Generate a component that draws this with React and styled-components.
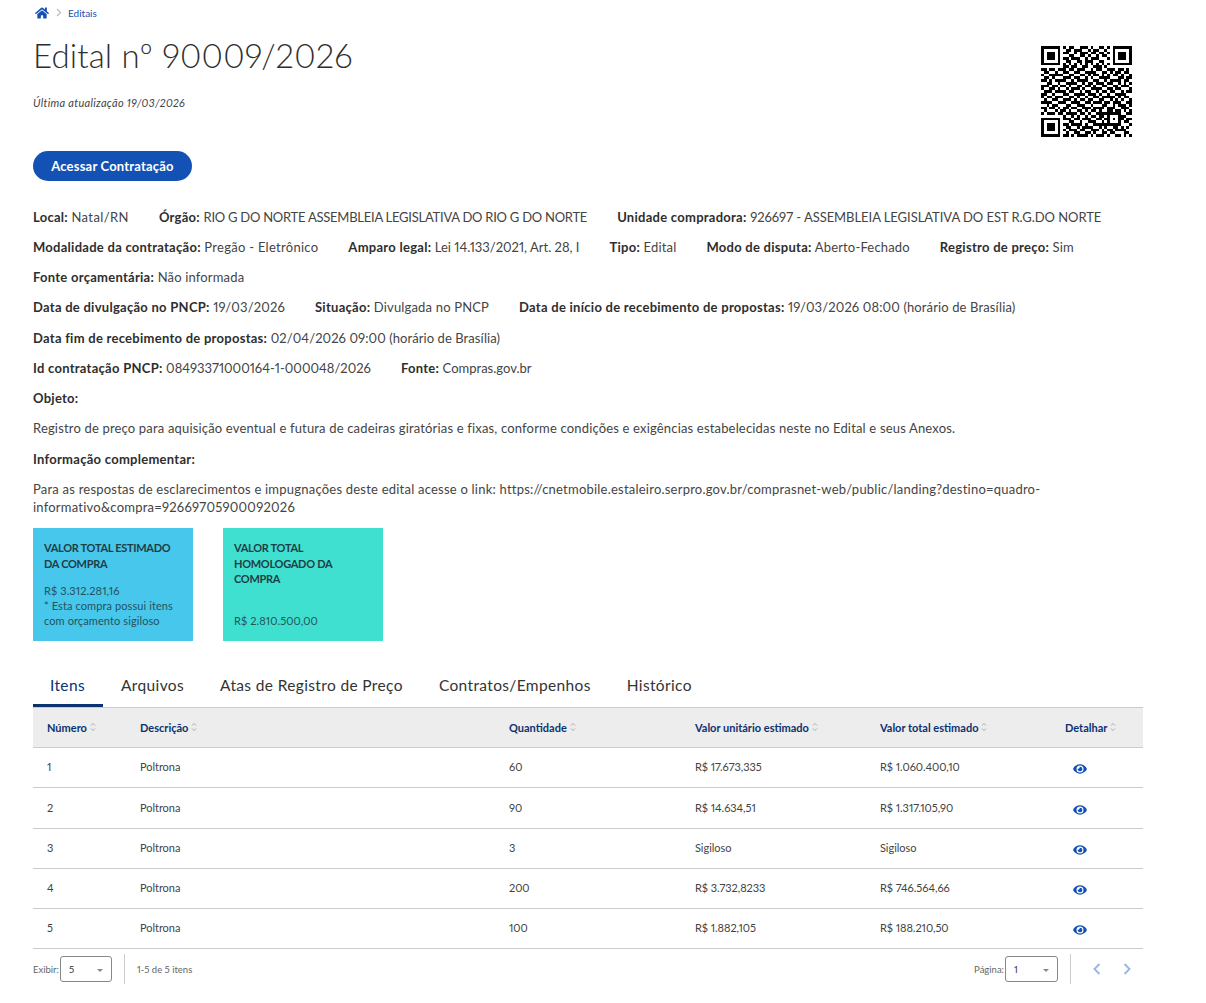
import React from "react";
import styled, { createGlobalStyle } from "styled-components";
import { FaHome, FaEye } from "react-icons/fa";

const Global = createGlobalStyle`
  html, body { margin: 0; padding: 0; background: #fff; }
  body {
    font-family: "Lato", "Liberation Sans", sans-serif;
    font-variant-numeric: proportional-nums;
    color: #333;
    font-size: 13px;
  }
`;

const Page = styled.div`
  width: 1110px;
  margin-left: 33px;
  padding-top: 6px;
`;
const Crumbs = styled.nav`
  display: flex;
  align-items: center;
  height: 13px;
  padding-left: 2px;
  font-size: 10px;
  color: #1351b4;
  svg { color: #1351b4; }
`;
const CrumbSep = styled.svg`
  width: 6px;
  height: 9px;
  margin: 0 6px 0 7px;
`;
const Header = styled.header`
  display: flex;
  justify-content: space-between;
  align-items: flex-start;
  padding-right: 11px;
`;
const HeadText = styled.div`
  display: flex;
  flex-direction: column;
  align-items: flex-start;
`;
const Title = styled.h1`
  margin: 13px 0 0;
  font-size: 33px;
  line-height: 46px;
  font-weight: 300;
  letter-spacing: 0.15px;
  color: #2e2e2e;
`;
const Updated = styled.p`
  margin: 18px 0 1px;
  font-size: 11px;
  line-height: 13px;
  font-style: italic;
  font-weight: 400;
  letter-spacing: 0.3px;
  color: #444;
`;
const Access = styled.button`
  margin-top: 41px;
  width: 159px;
  height: 30px;
  border: 0;
  border-radius: 15px;
  background: #1351b4;
  color: #fff;
  font: 700 13px "Lato", sans-serif;
  letter-spacing: 0.2px;
`;
const Qr = styled.svg`
  width: 91px;
  height: 91px;
  margin-top: 27px;
  display: block;
  shape-rendering: crispEdges;
`;
const Info = styled.section`
  margin-top: 20.7px;
`;
const Row = styled.div`
  display: flex;
  flex-wrap: wrap;
  column-gap: 30px;
  min-height: 30.25px;
  line-height: 30.25px;
  font-size: 13px;
  font-weight: 400;
  letter-spacing: 0.17px;
  color: #444;
`;
const Label = styled.b`
  font-weight: 700;
  letter-spacing: 0.27px;
  color: #2e2e2e;
`;
const Tight = styled.span`
  letter-spacing: ${(p) => p.$ls}px;
`;
const Para = styled.p`
  margin: 6px 0 0;
  font-size: 13px;
  line-height: 18px;
  font-weight: 400;
  letter-spacing: 0.22px;
  color: #444;
  width: 1050px;
`;
const Cards = styled.div`
  display: flex;
  gap: 30px;
  margin-top: 12.3px;
`;
const Card = styled.div`
  box-sizing: border-box;
  width: 160px;
  height: 113px;
  padding: 12px 11px 0;
  background: ${(p) => p.$bg};
  color: #1f3d44;
  display: flex;
  flex-direction: column;
  font-size: 11px;
  line-height: 15.5px;
`;
const CardTitle = styled.div`
  font-weight: 700;
  letter-spacing: -0.3px;
  height: ${(p) => p.$h}px;
`;
const CardText = styled.div`
  font-weight: 400;
  opacity: 0.85;
  letter-spacing: 0.1px;
  line-height: 15px;
`;
const Tabs = styled.div`
  display: flex;
  margin-top: 24px;
  height: 42px;
  border-bottom: 1px solid #ccc;
  box-sizing: content-box;
`;
const Tab = styled.div`
  padding: 11px 18px 0 ${(p) => (p.$first ? 17 : 18)}px;
  font-size: 15.5px;
  line-height: 18px;
  letter-spacing: 0.36px;
  color: #333;
  box-sizing: border-box;
  height: 42px;
  ${(p) => p.$active && `border-bottom: 3px solid #0c326f; color: #0c326f; padding-right: 18px;`}
`;
const Grid = `
  display: grid;
  grid-template-columns: 93px 369px 186px 185px 185px 92px;
  align-items: center;
`;
const THead = styled.div`
  ${Grid}
  height: 39px;
  background: #ededed;
  border-bottom: 1px solid #ccc;
  color: #0c326f;
  font-size: 11px;
  font-weight: 700;
`;
const Th = styled.div`
  padding-left: 14px;
  padding-bottom: 1px;
  display: flex;
  align-items: center;
  gap: 3px;
`;
const TRow = styled.div`
  ${Grid}
  box-sizing: border-box;
  height: 40.25px;
  border-bottom: 1px solid #ccc;
  font-size: 11px;
  color: #444;
  font-weight: 400;
`;
const Td = styled.div`
  padding-left: 14px;
  padding-bottom: 2px;
  letter-spacing: -0.05px;
`;
const EyeCell = styled.div`
  padding-left: 22px;
  padding-top: 3px;
  color: #1351b4;
  display: flex;
  svg { width: 14px; height: 14px; }
`;
const Footer = styled.footer`
  display: flex;
  align-items: center;
  justify-content: space-between;
  height: 40px;
  font-size: 9.5px;
  color: #666;
`;
const FootGroup = styled.div`
  display: flex;
  align-items: center;
  padding-right: ${(p) => p.$pr || 0}px;
`;
const Select = styled.div`
  box-sizing: border-box;
  width: ${(p) => p.$w}px;
  height: 26px;
  margin-left: 1px;
  padding: 0 8px;
  border: 1px solid #888;
  border-radius: 3px;
  display: flex;
  align-items: center;
  justify-content: space-between;
  color: #333;
`;
const Caret = styled.span`
  width: 0;
  height: 0;
  border-left: 3px solid transparent;
  border-right: 3px solid transparent;
  border-top: 3px solid #888;
  margin-top: 2px;
`;
const Divider = styled.span`
  width: 1px;
  height: 30px;
  background: #ccc;
  margin: 0 12px;
`;
const Pager = styled.svg`
  width: 10px;
  height: 14px;
  margin-left: ${(p) => p.$ml}px;
`;

const raw = [
"111111101011001110100110101111111",
"100000100110111001011001001000001",
"101110101100101110110110101011101",
"101110100011001101001011001011101",
"101110101101110010111000101011101",
"100000100110011011100110001000001",
"111111101010101010101010101111111",
"000000001101100110011101000000000",
"110110111011011100101100111011010",
"011001001100110011110011010110110",
"100111110011001101011010101101001",
"011010001110110010100111100011011",
"110101111001011110011001011110110",
"001100100111100101101110110010101",
"111011011010011011010011001101110",
"100110100101110100111100110110001",
"011101111011001011001011011001011",
"110010001100111101110100100111100",
"101101110011010010011011111010110",
"010011001110101101100110010101001",
"111100111001110011011101101110011",
"001011000110011100100011001011101",
"110110101101100111011110111001110",
"010001011010011010110100110110101",
"101110110111101101001111111110011",
"000000001001010010110110100011100",
"111111101110110111001101101011011",
"100000100011001001110010100010110",
"101110101101111010011111111110001",
"101110100110010111100101001101010",
"101110101011101100111010110111100",
"100000100100110011010011011000110",
"111111101101011110101110100110101",
];

function QrCode() {
  const rects = [];
  raw.forEach((r, y) => {
    r.padEnd(33, "0").slice(0, 33).split("").forEach((c, x) => {
      if (c === "1") rects.push(`M${x} ${y}h1v1h-1z`);
    });
  });
  return (
    <Qr viewBox="0 0 33 33" aria-label="QR code">
      <path d={rects.join("")} fill="#000" />
    </Qr>
  );
}

const Sort = () => (
  <svg width="6" height="10" viewBox="0 0 6 10" fill="none" stroke="#999" strokeWidth="0.8">
    <path d="M1 3.5 3 1.5l2 2M1 6.5l2 2 2-2" />
  </svg>
);

const Info2 = ({ l, children }) => (
  <span>
    <Label>{l}:</Label> {children}
  </span>
);

const heads = ["Número", "Descrição", "Quantidade", "Valor unitário estimado", "Valor total estimado", "Detalhar"];
const items = [
  ["1", "Poltrona", "60", "R$ 17.673,335", "R$ 1.060.400,10"],
  ["2", "Poltrona", "90", "R$ 14.634,51", "R$ 1.317.105,90"],
  ["3", "Poltrona", "3", "Sigiloso", "Sigiloso"],
  ["4", "Poltrona", "200", "R$ 3.732,8233", "R$ 746.564,66"],
  ["5", "Poltrona", "100", "R$ 1.882,105", "R$ 188.210,50"],
];

export default function App() {
  return (
    <Page>
      <Global />
      <Crumbs>
        <FaHome size={14} />
        <CrumbSep viewBox="0 0 6 9" fill="none" stroke="#bbb" strokeWidth="1.2">
          <path d="M1 1l3.5 3.5L1 8" />
        </CrumbSep>
        Editais
      </Crumbs>
      <Header>
        <HeadText>
          <Title>Edital nº 90009/2026</Title>
          <Updated>Última atualização 19/03/2026</Updated>
          <Access>Acessar Contratação</Access>
        </HeadText>
        <QrCode />
      </Header>
      <Info>
        <Row>
          <Info2 l="Local"><Tight $ls={0.4}>Natal/RN</Tight></Info2>
          <Info2 l="Órgão"><Tight $ls={-0.25}>RIO G DO NORTE ASSEMBLEIA LEGISLATIVA DO RIO G DO NORTE</Tight></Info2>
          <Info2 l="Unidade compradora"><Tight $ls={-0.05}>926697 - ASSEMBLEIA LEGISLATIVA DO EST R.G.DO NORTE</Tight></Info2>
        </Row>
        <Row>
          <Info2 l="Modalidade da contratação"><Tight $ls={0.28}>Pregão - Eletrônico</Tight></Info2>
          <Info2 l="Amparo legal"><Tight $ls={0}>Lei 14.133/2021, Art. 28, I</Tight></Info2>
          <Info2 l="Tipo">Edital</Info2>
          <Info2 l="Modo de disputa">Aberto-Fechado</Info2>
          <Info2 l="Registro de preço">Sim</Info2>
        </Row>
        <Row>
          <Info2 l="Fonte orçamentária">Não informada</Info2>
        </Row>
        <Row>
          <Info2 l="Data de divulgação no PNCP">19/03/2026</Info2>
          <Info2 l="Situação">Divulgada no PNCP</Info2>
          <Info2 l="Data de início de recebimento de propostas"><Tight $ls={0.12}>19/03/2026 08:00 (horário de Brasília)</Tight></Info2>
        </Row>
        <Row>
          <Info2 l="Data fim de recebimento de propostas"><Tight $ls={0.07}>02/04/2026 09:00 (horário de Brasília)</Tight></Info2>
        </Row>
        <Row>
          <Info2 l="Id contratação PNCP"><Tight $ls={0}>08493371000164-1-000048/2026</Tight></Info2>
          <Info2 l="Fonte"><Tight $ls={0}>Compras.gov.br</Tight></Info2>
        </Row>
        <Row>
          <Label>Objeto:</Label>
        </Row>
        <Row>
          Registro de preço para aquisição eventual e futura de cadeiras giratórias e fixas, conforme condições e exigências estabelecidas neste no Edital e seus Anexos.
        </Row>
        <Row>
          <Label>Informação complementar:</Label>
        </Row>
        <Para>
          Para as respostas de esclarecimentos e impugnações deste edital acesse o link: https://cnetmobile.estaleiro.serpro.gov.br/comprasnet-web/public/landing?destino=quadro-informativo&amp;compra=92669705900092026
        </Para>
      </Info>
      <Cards>
        <Card $bg="#47c7ec">
          <CardTitle $h={43}>VALOR TOTAL ESTIMADO DA COMPRA</CardTitle>
          <CardText>
            R$ 3.312.281,16
            <br />* Esta compra possui itens com orçamento sigiloso
          </CardText>
        </Card>
        <Card $bg="#3fe0d0">
          <CardTitle $h={73}>VALOR TOTAL HOMOLOGADO DA COMPRA</CardTitle>
          <CardText>R$ 2.810.500,00</CardText>
        </Card>
      </Cards>
      <Tabs>
        <Tab $first $active>Itens</Tab>
        <Tab>Arquivos</Tab>
        <Tab>Atas de Registro de Preço</Tab>
        <Tab>Contratos/Empenhos</Tab>
        <Tab>Histórico</Tab>
      </Tabs>
      <THead>
        {heads.map((h) => (
          <Th key={h}>
            {h}
            <Sort />
          </Th>
        ))}
      </THead>
      {items.map((it) => (
        <TRow key={it[0]}>
          {it.map((v, i) => (
            <Td key={i}>{v}</Td>
          ))}
          <EyeCell>
            <FaEye />
          </EyeCell>
        </TRow>
      ))}
      <Footer>
        <FootGroup>
          Exibir:
          <Select $w={52}>
            5<Caret />
          </Select>
          <Divider />
          1-5 de 5 itens
        </FootGroup>
        <FootGroup $pr={11}>
          Página:
          <Select $w={53}>
            1<Caret />
          </Select>
          <Divider />
          <Pager $ml={9} viewBox="0 0 10 14" fill="none" stroke="#9db8e0" strokeWidth="2">
            <path d="M7.5 2 2.5 7l5 5" />
          </Pager>
          <Pager $ml={20} viewBox="0 0 10 14" fill="none" stroke="#9db8e0" strokeWidth="2">
            <path d="M2.5 2l5 5-5 5" />
          </Pager>
        </FootGroup>
      </Footer>
    </Page>
  );
}
